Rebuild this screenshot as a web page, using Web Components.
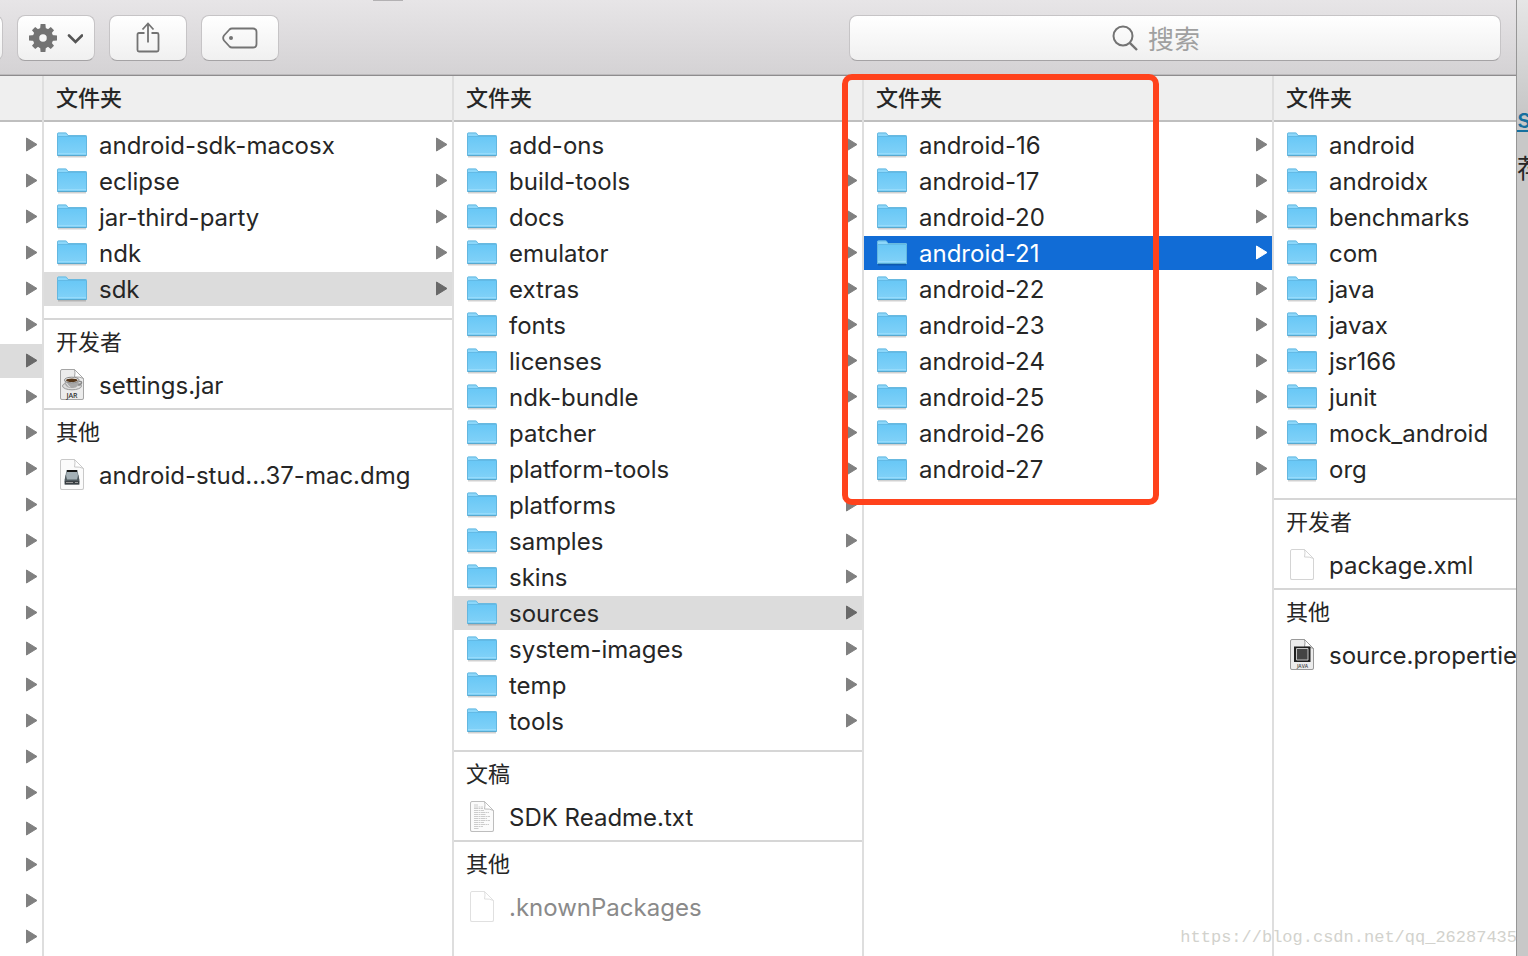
<!DOCTYPE html>
<html lang="zh-CN">
<head>
<meta charset="utf-8">
<meta name="viewport" content="width=device-width, initial-scale=1">
<title>sources</title>
<style>
  html, body {
    margin: 0;
    height: 100%;
  }

  body {
    background: #fff;
    color: #262626;
    font-family: Inter, "Noto Sans CJK SC", sans-serif;
    font-size: 24px;
    overflow: hidden;
  }
</style>
</head>
<body>
<finder-desktop>
  <finder-window>
    <finder-toolbar slot="toolbar"></finder-toolbar>

    <finder-column>
      <file-row arrow></file-row>
      <file-row arrow></file-row>
      <file-row arrow></file-row>
      <file-row arrow></file-row>
      <file-row arrow></file-row>
      <file-row arrow></file-row>
      <file-row arrow open></file-row>
      <file-row arrow></file-row>
      <file-row arrow></file-row>
      <file-row arrow></file-row>
      <file-row arrow></file-row>
      <file-row arrow></file-row>
      <file-row arrow></file-row>
      <file-row arrow></file-row>
      <file-row arrow></file-row>
      <file-row arrow></file-row>
      <file-row arrow></file-row>
      <file-row arrow></file-row>
      <file-row arrow></file-row>
      <file-row arrow></file-row>
      <file-row arrow></file-row>
      <file-row arrow></file-row>
      <file-row arrow></file-row>
    </finder-column>

    <finder-column>
      <span slot="heading">文件夹</span>
      <file-row icon="folder" arrow>android-sdk-macosx</file-row>
      <file-row icon="folder" arrow>eclipse</file-row>
      <file-row icon="folder" arrow>jar-third-party</file-row>
      <file-row icon="folder" arrow>ndk</file-row>
      <file-row icon="folder" arrow open>sdk</file-row>
      <file-group>
        <span slot="label">开发者</span>
        <file-row icon="jar">settings.jar</file-row>
      </file-group>
      <file-group>
        <span slot="label">其他</span>
        <file-row icon="dmg">android-stud...37-mac.dmg</file-row>
      </file-group>
    </finder-column>

    <finder-column>
      <span slot="heading">文件夹</span>
      <file-row icon="folder" arrow>add-ons</file-row>
      <file-row icon="folder" arrow>build-tools</file-row>
      <file-row icon="folder" arrow>docs</file-row>
      <file-row icon="folder" arrow>emulator</file-row>
      <file-row icon="folder" arrow>extras</file-row>
      <file-row icon="folder" arrow>fonts</file-row>
      <file-row icon="folder" arrow>licenses</file-row>
      <file-row icon="folder" arrow>ndk-bundle</file-row>
      <file-row icon="folder" arrow>patcher</file-row>
      <file-row icon="folder" arrow>platform-tools</file-row>
      <file-row icon="folder" arrow>platforms</file-row>
      <file-row icon="folder" arrow>samples</file-row>
      <file-row icon="folder" arrow>skins</file-row>
      <file-row icon="folder" arrow open>sources</file-row>
      <file-row icon="folder" arrow>system-images</file-row>
      <file-row icon="folder" arrow>temp</file-row>
      <file-row icon="folder" arrow>tools</file-row>
      <file-group>
        <span slot="label">文稿</span>
        <file-row icon="text">SDK Readme.txt</file-row>
      </file-group>
      <file-group>
        <span slot="label">其他</span>
        <file-row icon="blank" dim>.knownPackages</file-row>
      </file-group>
    </finder-column>

    <finder-column>
      <highlight-box slot="overlay"></highlight-box>
      <span slot="heading">文件夹</span>
      <file-row icon="folder" arrow>android-16</file-row>
      <file-row icon="folder" arrow>android-17</file-row>
      <file-row icon="folder" arrow>android-20</file-row>
      <file-row icon="folder" arrow selected>android-21</file-row>
      <file-row icon="folder" arrow>android-22</file-row>
      <file-row icon="folder" arrow>android-23</file-row>
      <file-row icon="folder" arrow>android-24</file-row>
      <file-row icon="folder" arrow>android-25</file-row>
      <file-row icon="folder" arrow>android-26</file-row>
      <file-row icon="folder" arrow>android-27</file-row>
    </finder-column>

    <finder-column last>
      <span slot="heading">文件夹</span>
      <file-row icon="folder">android</file-row>
      <file-row icon="folder">androidx</file-row>
      <file-row icon="folder">benchmarks</file-row>
      <file-row icon="folder">com</file-row>
      <file-row icon="folder">java</file-row>
      <file-row icon="folder">javax</file-row>
      <file-row icon="folder">jsr166</file-row>
      <file-row icon="folder">junit</file-row>
      <file-row icon="folder">mock_android</file-row>
      <file-row icon="folder">org</file-row>
      <file-group>
        <span slot="label">开发者</span>
        <file-row icon="blank">package.xml</file-row>
      </file-group>
      <file-group>
        <span slot="label">其他</span>
        <file-row icon="java">source.propertie</file-row>
      </file-group>
    </finder-column>
  </finder-window>

  <page-behind slot="behind">
    <a href="#s">s</a>
    <span slot="text">荐</span>
  </page-behind>
  <span slot="watermark">https://blog.csdn.net/qq_26287435</span>
</finder-desktop>

<script>
"use strict";

// attaches an open shadow root filled from a markup string
function render(host, markup) {
  const template = document.createElement("template");
  template.innerHTML = markup;
  host.attachShadow({ mode: "open" });
  host.shadowRoot.appendChild(template.content.cloneNode(true));
}

const sheet = (fill, stroke) => `
  <path d="M3.5 1.5h15l8 8v21h-23z" transform="translate(0 .5)" fill="#000" opacity=".12"/>
  <path d="M3.5 2q0-1.500 1.500-1.500h12.500l9 9V29q0 1.500-1.500 1.500h-20q-1.500 0-1.500-1.500z" fill="${fill}" stroke="${stroke}"/>
  <path d="M17.500.500q1 3 0 7.500 5-.500 9 1.500z" fill="#fff" stroke="${stroke}"/>`;

const icons = {
  folder: `<svg width="30" height="26" viewBox="0 0 30 26">
    <defs><linearGradient id="f" x2="0" y2="1"><stop stop-color="#69c8f6"/><stop offset="1" stop-color="#83d2f8"/></linearGradient></defs>
    <path d="M1 24.500h28" stroke="#000" stroke-opacity=".18" stroke-width="2"/>
    <path d="M0 23V2q0-1.500 1.500-1.500h7Q9.500.500 10 1.500l1 1.500h17.500q1.500 0 1.500 1.500V23q0 1-1 1H1q-1 0-1-1z" fill="#8dd7fa"/>
    <path d="M0 5h30v18q0 1-1 1H1q-1 0-1-1z" fill="url(#f)"/>
    <path d="M.500 23V2Q.500 1 1.500 1h7q1 0 1.500 1l1 1.500h17.500q1 0 1 1V23" fill="none" stroke="#5fb2da" stroke-opacity=".8"/>
    <path d="M1 4.500h28" stroke="#62bae6"/>
    <path d="M1 21.500h28" stroke="#9fe0fc" stroke-opacity=".7"/>
    <path d="M.500 23.500h29" stroke="#58a9cf"/>
  </svg>`,
  blank: `<svg width="30" height="32" viewBox="0 0 30 32">${sheet("#fff", "#d4d4d4")}</svg>`,
  text: `<svg width="30" height="32" viewBox="0 0 30 32">${sheet("#fbfbfb", "#bdbdbd")}
    <path d="M7 4h4M7 6h9M7 7.500h9M7 9.500h10M7 11.500h15M7 13.500h12M7 15.500h16M7 17.500h13M7 19.500h16M7 21.500h10M7 23.500h15M7 25.500h9M7 27.500h5" stroke="#ccc" stroke-width="1" stroke-dasharray="4 .5 2 .5"/>
  </svg>`,
  jar: `<svg width="30" height="32" viewBox="0 0 30 32">${sheet("#ececec", "#a5a5a5")}
    <ellipse cx="15" cy="17" rx="9.500" ry="3.800" fill="#ddd" stroke="#999"/>
    <path d="M7.500 11.500q0 7.500 6.500 7.500h2q6 0 6-7.500z" fill="#a9a9a9"/>
    <path d="M9 14q2 4 5 4.500-4-3-4-5z" fill="#e8e8e8"/>
    <path d="M22 12.500q3-.500 2.500 1.500-.500 2-3.500 2" fill="none" stroke="#8a8a8a" stroke-width="1.500"/>
    <ellipse cx="14.800" cy="11" rx="7.300" ry="2.800" fill="#f4f4f4" stroke="#888"/>
    <ellipse cx="14.800" cy="11.300" rx="5.800" ry="1.800" fill="#54361a"/>
    <text x="15" y="29" text-anchor="middle" font-family="Open Sans" font-size="7" font-weight="600" fill="#333">JAR</text>
  </svg>`,
  dmg: `<svg width="30" height="32" viewBox="0 0 30 32">${sheet("#fbfbfb", "#c9c9c9")}
    <path d="M9.500 11h11l1.800 10v4.500H7.700V21z" fill="#79848a"/>
    <path d="M10 12h10l1.500 9h-13z" fill="#a4b0b6"/>
    <path d="M10 11h10v2H10z" fill="#161616"/>
    <path d="M7.700 20.500l1-5 1.300 5h10l1.300-5 1 5v2H7.700z" fill="#4e585d"/>
    <path d="M7.700 22h14.600v3.500H7.700z" fill="#3a4044"/>
    <path d="M9 23.500h7M18 23.500h3" stroke="#999"/>
  </svg>`,
  java: `<svg width="30" height="32" viewBox="0 0 30 32">${sheet("#ececec", "#999")}
    <path d="M7 7.500h16.500V23H7z" fill="#1f1f1f"/>
    <path d="M9.500 9.500h11.500V21H9.500z" fill="#464646" stroke="#c4c4c4"/>
    <path d="M11 11h8.500v8.500H11z" fill="#444"/>
    <text x="15.500" y="29" text-anchor="middle" font-family="Open Sans" font-size="5" font-weight="600" fill="#444">JAVA</text>
  </svg>`
};

class FinderDesktop extends HTMLElement {
  constructor() {
    super();
    render(this, `
      <style>
        :host {
          position: relative;
          display: flex;
          height: 100%;
        }

        .main {
          flex: 1;
          min-width: 0;
          display: flex;
        }

        .watermark {
          position: absolute;
          right: 11px;
          bottom: 6px;
          font: 17px/24px "Liberation Mono", monospace;
          color: #d2d2cd;
        }
      </style>
      <div class="main"><slot></slot></div>
      <slot name="behind"></slot>
      <div class="watermark"><slot name="watermark"></slot></div>`);
  }
}

class FinderWindow extends HTMLElement {
  constructor() {
    super();
    render(this, `
      <style>
        :host {
          flex: 1;
          min-width: 0;
          display: flex;
          flex-direction: column;
          background: #fff;
        }

        .columns {
          flex: 1;
          min-height: 0;
          display: grid;
          grid-template-columns: 44px repeat(3, minmax(0, 410fr)) minmax(0, 242fr);
        }
      </style>
      <slot name="toolbar"></slot>
      <div class="columns"><slot></slot></div>`);
  }
}

class FinderToolbar extends HTMLElement {
  constructor() {
    super();
    render(this, `
      <style>
        :host {
          position: relative;
          box-sizing: border-box;
          height: 76px;
          display: flex;
          align-items: center;
          justify-content: space-between;
          padding-right: 15px;
          overflow: hidden;
          background: linear-gradient(#e7e5e7, #d4d2d4);
          border-bottom: 1px solid #8e8c8e;
          box-shadow: inset 0 -1px #bcbabc;
        }

        .grip {
          position: absolute;
          top: 0;
          left: 373px;
          width: 30px;
          height: 1px;
          background: #b3b1b3;
        }

        .buttons {
          display: flex;
          gap: 14px;
          margin-left: -75px;
        }

        button, .search {
          box-sizing: border-box;
          height: 46px;
          border: 1px solid #c6c4c6;
          border-bottom-color: #a5a3a5;
          border-radius: 8px;
          background: linear-gradient(#fff, #f0f0f0);
        }

        .buttons, .search {
          margin-top: 1px;
        }

        button {
          width: 78px;
          padding: 0;
          display: flex;
          align-items: center;
          justify-content: center;
        }

        .search {
          flex: 0 1 652px;
          display: flex;
          align-items: center;
          justify-content: center;
          gap: 10px;
        }

        input {
          width: 90px;
          height: 40px;
          padding: 2px 0 0;
          box-sizing: border-box;
          border: 0;
          outline: 0;
          background: none;
          font: inherit;
          font-size: 26px;
          color: #262626;
        }

        input::placeholder {
          color: #a0a0a0;
        }
      </style>
      <div class="grip"></div>
      <div class="buttons">
        <button aria-label="View"></button>
        <button aria-label="Actions">
          <svg width="54" height="28" viewBox="0 0 54 28">
            <g fill="#737373">
              <g id="t"><path d="M11.600 0h4.800l.6 6h-6zM11.600 28h4.800l.6-6h-6z"/><path d="M0 11.600v4.800l6 .6v-6zM28 11.600v4.800l-6 .6v-6z"/></g>
              <use href="#t" transform="rotate(45 14 14) translate(.7 .7) scale(.95)"/>
            </g>
            <circle cx="14" cy="14" r="7" fill="none" stroke="#737373" stroke-width="6.500"/>
            <path d="M40 11.500l6.500 6.500 6.500-6.500" fill="none" stroke="#555" stroke-width="2.600" stroke-linecap="round"/>
          </svg>
        </button>
        <button aria-label="Share">
          <svg width="24" height="32" viewBox="0 0 24 32" fill="none" stroke="#737373" stroke-width="1.800">
            <path d="M8.500 11H3q-1.500 0-1.500 1.500v15.500q0 1.500 1.500 1.500h18q1.500 0 1.500-1.500V12.500Q22.500 11 21 11h-5.500M12 20.500V2M6.500 7.500L12 1.500l5.500 6"/>
          </svg>
        </button>
        <button aria-label="Tags">
          <svg width="36" height="22" viewBox="0 0 36 22">
            <path d="M10 1.500h21q3.500 0 3.500 3.500v12q0 3.500-3.500 3.500H10q-1.500 0-2.500-1L2 13.500Q.300 11 2 8.500l5.500-6q1-1 2.500-1z" fill="none" stroke="#737373" stroke-width="1.800"/>
            <circle cx="9" cy="11" r="2" fill="#737373"/>
          </svg>
        </button>
      </div>
      <label class="search">
        <svg width="26" height="26" viewBox="0 0 26 26" fill="none" stroke="#737373" stroke-width="2">
          <circle cx="11" cy="11" r="9.500"/>
          <path d="M17.800 17.800L25 25" stroke-width="2.400"/>
        </svg>
        <input type="text" placeholder="搜索" aria-label="搜索">
      </label>`);
  }
}

class FinderColumn extends HTMLElement {
  constructor() {
    super();
    render(this, `
      <style>
        :host {
          position: relative;
          display: flex;
          flex-direction: column;
          min-width: 0;
          border-right: 2px solid #dedede;
        }

        :host([last]) {
          border-right: 0;
          overflow: hidden;
        }

        header {
          box-sizing: border-box;
          height: 46px;
          padding-left: 12px;
          background: #efefef;
          border-bottom: 2px solid #bfbfbf;
          font-size: 22px;
          font-weight: 500;
          line-height: 44px;
        }

        .rows {
          display: flex;
          flex-direction: column;
          gap: 2px;
          padding: 6px 0;
        }
      </style>
      <header><slot name="heading"></slot></header>
      <div class="rows" role="listbox"><slot></slot></div>
      <slot name="overlay"></slot>`);
  }
}

class FileGroup extends HTMLElement {
  constructor() {
    super();
    render(this, `
      <style>
        :host {
          display: block;
          margin-top: 4px;
          border-top: 2px solid #d6d6d6;
        }

        :host(:first-of-type) {
          margin-top: 10px;
        }

        .label {
          padding-left: 12px;
          margin-bottom: 4px;
          font-size: 22px;
          line-height: 44px;
        }
      </style>
      <div class="label"><slot name="label"></slot></div>
      <slot></slot>`);
  }
}

class FileRow extends HTMLElement {
  constructor() {
    super();
    const icon = icons[this.getAttribute("icon")] || "";
    const arrow = this.hasAttribute("arrow")
      ? `<svg class="arrow" width="12" height="16" viewBox="0 0 12 16"><path d="M.500 1l10.500 6.500L.500 14z" fill="currentColor" stroke="currentColor" stroke-linejoin="round"/></svg>`
      : "";
    render(this, `
      <style>
        :host {
          display: flex;
          align-items: center;
          height: 34px;
          padding: 0 4px 0 13px;
          white-space: nowrap;
          --arrow: #808080;
        }

        :host([open]) {
          background: #dcdcdc;
          --arrow: #696969;
        }

        :host([selected]) {
          background: #116cd6;
          color: #fff;
          --arrow: #fff;
        }

        :host([dim]) {
          color: #8a8a8a;
        }

        :host([dim]) .icon {
          opacity: .7;
        }

        .icon {
          display: flex;
          margin-right: 12px;
        }

        .arrow {
          margin-left: auto;
          color: var(--arrow);
        }

        .name {
          padding-top: 2px;
          line-height: 32px;
        }
      </style>
      ${icon && `<span class="icon">${icon}</span>`}
      <span class="name"><slot></slot></span>
      ${arrow}`);
    this.setAttribute("role", "option");
  }
}

// red frame drawn over the column it sits in
class HighlightBox extends HTMLElement {
  constructor() {
    super();
    render(this, `
      <style>
        :host {
          position: absolute;
          z-index: 1;
          top: -2px;
          left: -22px;
          box-sizing: border-box;
          width: 317px;
          height: 431px;
          border: 6px solid #ff421c;
          border-radius: 10px;
        }
      </style>`);
  }
}

class PageBehind extends HTMLElement {
  constructor() {
    super();
    render(this, `
      <style>
        :host {
          box-sizing: border-box;
          width: 12px;
          padding-top: 104px;
          overflow: hidden;
          border-left: 1px solid #969696;
          background: linear-gradient(#e6e6e6, #c8c8c8 110px);
          font-size: 26px;
          line-height: 30px;
        }

        ::slotted(a) {
          display: block;
          margin-bottom: 20px;
          color: #15709f;
          font-weight: 500;
          text-decoration: underline;
        }

        ::slotted(span) {
          display: block;
          width: 26px;
        }
      </style>
      <slot></slot>
      <slot name="text"></slot>`);
  }
}

window.customElements.define("finder-desktop", FinderDesktop);
window.customElements.define("finder-window", FinderWindow);
window.customElements.define("finder-toolbar", FinderToolbar);
window.customElements.define("finder-column", FinderColumn);
window.customElements.define("file-group", FileGroup);
window.customElements.define("file-row", FileRow);
window.customElements.define("highlight-box", HighlightBox);
window.customElements.define("page-behind", PageBehind);
</script>
</body>
</html>
